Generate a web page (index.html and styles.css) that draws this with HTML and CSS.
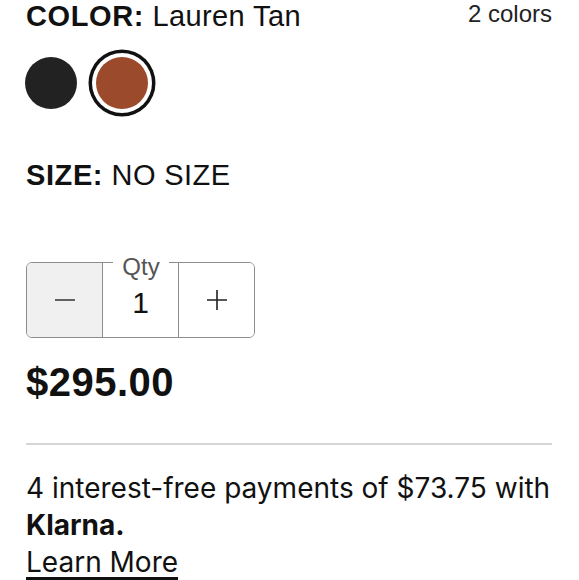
FILE: index.html
```html
<!DOCTYPE html>
<html lang="en">
<head>
    <meta charset="UTF-8">
    <title>Product options</title>
    <link rel="stylesheet" href="styles.css">
</head>
<body>
<div class="product">
    <div class="color-head">
        <p class="opt-label"><b>COLOR:</b> Lauren Tan</p>
        <span class="count">2 colors</span>
    </div>
    <div class="swatches">
        <button class="swatch black" title="Black"></button>
        <button class="swatch tan selected" title="Lauren Tan"></button>
    </div>
    <p class="opt-label size"><b>SIZE:</b> NO SIZE</p>
    <div class="qty">
        <button class="qty-btn minus">
            <svg width="20" height="20" viewBox="0 0 20 20"><path d="M0 10H20" stroke="#333" stroke-width="1.5"/></svg>
        </button>
        <div class="qty-val"><span class="qty-label">Qty</span>1</div>
        <button class="qty-btn plus">
            <svg width="20" height="20" viewBox="0 0 20 20"><path d="M0 10H20M10 0V20" stroke="#222" stroke-width="1.6"/></svg>
        </button>
    </div>
    <div class="price">$295.00</div>
    <hr class="rule">
    <p class="klarna">4 interest-free payments of $73.75 with <b class="brand">Klarna.</b><a href="javascript:;" class="learn">Learn More</a></p>
</div>
</body>
</html>
```

FILE: styles.css
```css
*{margin: 0;padding: 0;box-sizing: border-box;}
html{overflow: hidden;}
body{background: #fff;color: #111;font-family: "Liberation Sans", Arial, sans-serif;}
.product{padding: 0 27px 0 26px;}
.color-head{display: flex;justify-content: space-between;align-items: flex-start;}
.opt-label{font-size: 29px;line-height: 32px;letter-spacing: 0.4px;color: #111;}
.opt-label b{font-weight: 700;letter-spacing: 0.6px;}
.count{font-size: 24px;line-height: 28px;color: #222;}
.swatches{display: flex;gap: 19px;margin-top: 25px;margin-left: -1px;}
.swatch{width: 52px;height: 52px;border-radius: 50%;border: none;cursor: pointer;}
.swatch.black{background: #222;}
.swatch.tan{background: #9c4a2c;}
.swatch.selected{box-shadow: 0 0 0 4px #fff, 0 0 0 7.5px #111;}
.size{margin-top: 50px;}
.qty{display: flex;width: 229px;height: 76px;margin-top: 71px;border: 1.5px solid #8c8c8c;border-radius: 6px;position: relative;}
.qty-btn{flex: 1;border: none;background: #fff;display: flex;align-items: center;justify-content: center;border-radius: 0 5px 5px 0;}
.qty-btn.minus{background: #f0f0f0;border-radius: 5px 0 0 5px;border-right: 1.5px solid #8c8c8c;}
.qty-val{flex: 1;display: flex;align-items: center;justify-content: center;border-right: 1.5px solid #8c8c8c;font-size: 30px;padding-top: 6px;color: #111;}
.qty-label{position: absolute;top: -9px;left: 86px;width: 56px;text-align: center;background: #fff;font-size: 24px;line-height: 26px;color: #555;}
.price{margin-top: 22px;font-size: 40px;line-height: 44px;letter-spacing: 0.5px;font-weight: 700;color: #111;}
.rule{margin-top: 39px;border: none;border-top: 2px solid #d6d6d6;}
.klarna{margin-top: 25px;font-family: Inter, "Liberation Sans", sans-serif;font-size: 28px;line-height: 37px;color: #111;}
.brand{display: block;font-weight: 700;}
.learn{color: #111;text-decoration: underline;text-decoration-thickness: 3px;text-underline-offset: 5px;}
```
